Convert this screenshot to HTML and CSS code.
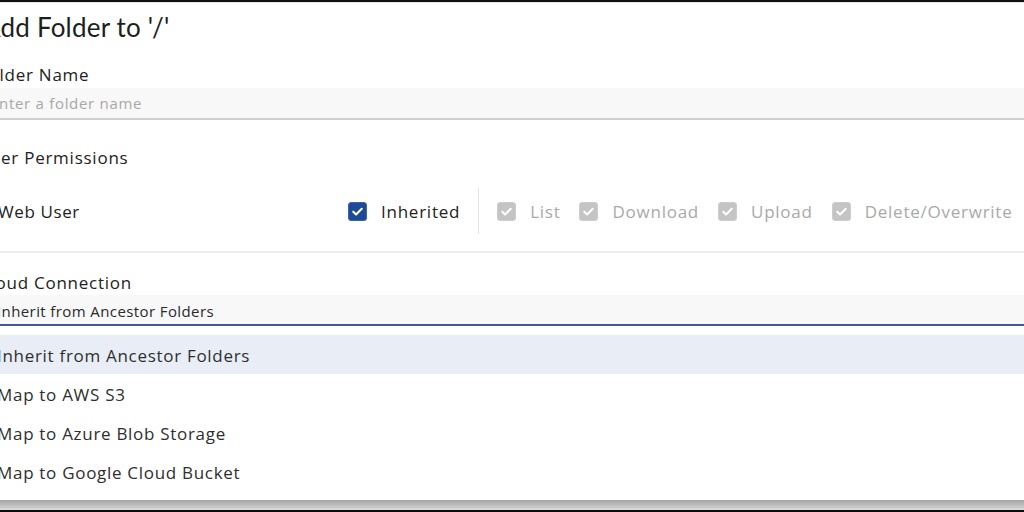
FILE: index.html
```html
<!DOCTYPE html>
<html lang="en">
<head>
<meta charset="utf-8">
<title>Add Folder</title>
<link rel="stylesheet" href="styles.css">
</head>
<body>
<div class="screen">
  <div class="topbar"></div>
  <div class="dialog">
    <h1 class="title">Add Folder to '/'</h1>

    <div class="field">
      <label class="field-label">Folder Name</label>
      <div class="input placeholder">Enter a folder name</div>
    </div>

    <div class="section-label">User Permissions</div>

    <div class="perm-row">
      <div class="perm-user">Web User</div>
      <div class="perm-checks">
        <span class="check">
          <span class="box box-on"><svg viewBox="0 0 20 20"><path d="M5 10.2l3.3 3.3L15 6.8" /></svg></span>
          <span class="check-label">Inherited</span>
        </span>
        <span class="vdivider"></span>
        <span class="check check-disabled">
          <span class="box box-off"><svg viewBox="0 0 20 20"><path d="M5 10.2l3.3 3.3L15 6.8" /></svg></span>
          <span class="check-label">List</span>
        </span>
        <span class="check check-disabled">
          <span class="box box-off"><svg viewBox="0 0 20 20"><path d="M5 10.2l3.3 3.3L15 6.8" /></svg></span>
          <span class="check-label">Download</span>
        </span>
        <span class="check check-disabled">
          <span class="box box-off"><svg viewBox="0 0 20 20"><path d="M5 10.2l3.3 3.3L15 6.8" /></svg></span>
          <span class="check-label">Upload</span>
        </span>
        <span class="check check-disabled">
          <span class="box box-off"><svg viewBox="0 0 20 20"><path d="M5 10.2l3.3 3.3L15 6.8" /></svg></span>
          <span class="check-label">Delete/Overwrite</span>
        </span>
      </div>
    </div>

    <div class="hdivider"></div>

    <div class="field cloud">
      <label class="field-label">Cloud Connection</label>
      <div class="select">Inherit from Ancestor Folders</div>
      <ul class="menu">
        <li class="option option-active">Inherit from Ancestor Folders</li>
        <li class="option">Map to AWS S3</li>
        <li class="option">Map to Azure Blob Storage</li>
        <li class="option">Map to Google Cloud Bucket</li>
      </ul>
    </div>
  </div>
  <div class="bottom-shadow"></div>
  <div class="bottombar"></div>
</div>
</body>
</html>
```
FILE: styles.css
```css
html, body {
  margin: 0;
  padding: 0;
  background: #ffffff;
  overflow: hidden;
}

.screen {
  width: 1024px;
  height: 512px;
  display: flex;
  flex-direction: column;
  overflow: hidden;
  font-family: "Open Sans", "Liberation Sans", sans-serif;
  color: #222222;
}

.topbar {
  height: 2px;
  background: #111111;
  flex: 0 0 auto;
  border-bottom: 1px solid #e6e6e6;
}

.dialog {
  flex: 1 1 auto;
  margin-left: -21px;
  width: 1100px;
  display: flex;
  flex-direction: column;
}

.title {
  margin: 9px 0 0 4px;
  font-family: "Lato", "Open Sans", sans-serif;
  font-weight: 400;
  font-size: 26px;
  line-height: 30px;
  height: 30px;
  color: #1e1e1e;
  letter-spacing: 0.2px;
}

.field {
  display: flex;
  flex-direction: column;
}

.field-label, .section-label {
  font-size: 17px;
  line-height: 20px;
  height: 20px;
  color: #222222;
  letter-spacing: 0.75px;
}

.field .field-label {
  margin-top: 23px;
}

.input {
  margin-top: 3px;
  height: 30px;
  line-height: 31px;
  background: #f8f8f8;
  border-bottom: 2px solid #d0d0d0;
  padding-left: 11px;
  font-size: 15px;
  letter-spacing: 0.7px;
}

.placeholder {
  color: #a8a8a8;
}

.section-label {
  margin-top: 28px;
}

.perm-row {
  margin-top: 20px;
  height: 46px;
  display: flex;
  align-items: center;
  padding-left: 19px;
}

.perm-user {
  flex: 0 0 350px;
  font-size: 17px;
  letter-spacing: 0.6px;
}

.perm-checks {
  display: flex;
  align-items: center;
  height: 46px;
  gap: 19px;
}

.check {
  display: flex;
  align-items: center;
  gap: 14px;
}

.check-label {
  font-size: 17px;
  letter-spacing: 0.75px;
  color: #222222;
}

.check-disabled .check-label {
  color: #a9a9a9;
}

.box {
  width: 19px;
  height: 19px;
  border-radius: 3px;
  box-sizing: border-box;
  display: flex;
  align-items: center;
  justify-content: center;
}

.box svg {
  width: 19px;
  height: 19px;
  fill: none;
  stroke: #ffffff;
  stroke-width: 2.4;
  stroke-linecap: round;
  stroke-linejoin: round;
}

.box-on {
  background: #1d4a96;
  border: 1px solid #3a64ad;
}

.box-off {
  background: #c4c4c4;
  border: 1px solid #cdcdcd;
}

.vdivider {
  width: 1px;
  height: 46px;
  background: #e3e3e3;
  margin: 0 -1px;
}

.hdivider {
  margin-top: 17px;
  height: 2px;
  background: #ededed;
}

.cloud .field-label {
  margin-top: 20px;
}

.select {
  margin-top: 2px;
  height: 29px;
  line-height: 32px;
  background: #f8f8f8;
  border-bottom: 2px solid #3b5a9a;
  padding-left: 18px;
  font-size: 15px;
  color: #2a2a2a;
  letter-spacing: 0.4px;
  overflow: hidden;
}

.menu {
  list-style: none;
  margin: 9px 0 0;
  padding: 0;
}

.option {
  height: 39px;
  box-sizing: border-box;
  padding: 3px 0 0 18px;
  line-height: 36px;
  font-size: 17px;
  color: #2e2e2e;
  letter-spacing: 0.7px;
}

.option-active {
  background: #e9eef6;
}

.bottom-shadow {
  flex: 0 0 auto;
  height: 10px;
  background: linear-gradient(#a4a4a4, #c8c8c8 70%, #e0e0e0);
}

.bottombar {
  flex: 0 0 auto;
  height: 2px;
  background: #0c0c0c;
}
```
